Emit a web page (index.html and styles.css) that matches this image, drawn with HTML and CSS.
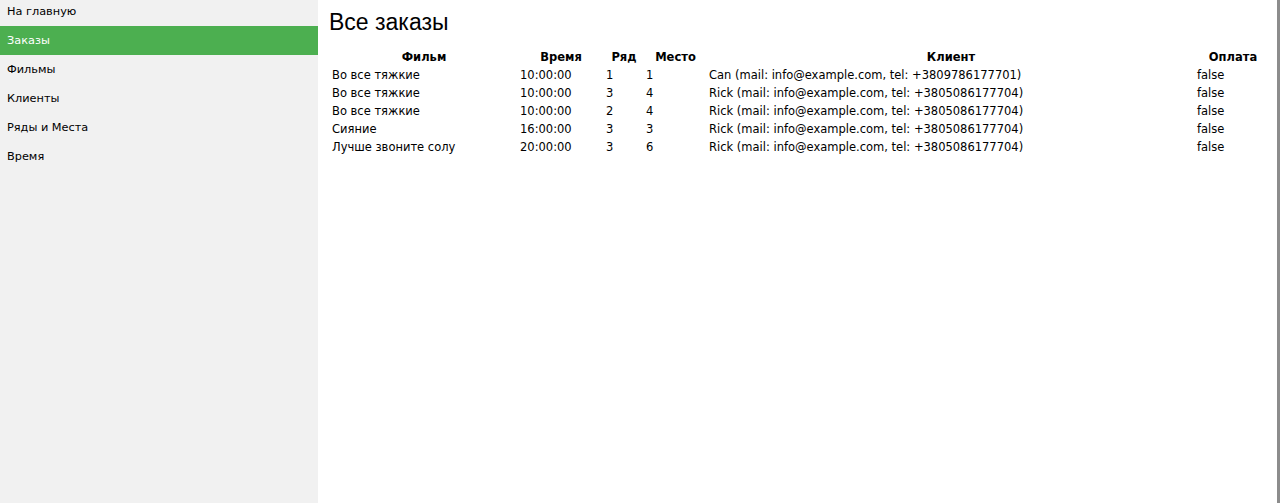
FILE: index.html
```html
<!DOCTYPE html>
<html lang="ru">
<head>
<meta charset="utf-8">
<title>Все заказы</title>
<link rel="stylesheet" href="styles.css">
</head>
<body>
<div class="layout">
  <nav class="sidebar">
    <a class="nav-link first" href="#">На главную</a>
    <a class="nav-link active" href="#">Заказы</a>
    <a class="nav-link" href="#">Фильмы</a>
    <a class="nav-link" href="#">Клиенты</a>
    <a class="nav-link" href="#">Ряды и Места</a>
    <a class="nav-link" href="#">Время</a>
  </nav>
  <main class="content">
    <h1 class="title">Все заказы</h1>
    <table class="orders">
      <thead>
        <tr>
          <th class="c-film">Фильм</th>
          <th class="c-time">Время</th>
          <th class="c-row">Ряд</th>
          <th class="c-seat">Место</th>
          <th class="c-client">Клиент</th>
          <th class="c-paid">Оплата</th>
        </tr>
      </thead>
      <tbody>
        <tr><td>Во все тяжкие</td><td>10:00:00</td><td>1</td><td>1</td><td>Can (mail: info@example.com, tel: +3809786177701)</td><td>false</td></tr>
        <tr><td>Во все тяжкие</td><td>10:00:00</td><td>3</td><td>4</td><td>Rick (mail: info@example.com, tel: +3805086177704)</td><td>false</td></tr>
        <tr><td>Во все тяжкие</td><td>10:00:00</td><td>2</td><td>4</td><td>Rick (mail: info@example.com, tel: +3805086177704)</td><td>false</td></tr>
        <tr><td>Сияние</td><td>16:00:00</td><td>3</td><td>3</td><td>Rick (mail: info@example.com, tel: +3805086177704)</td><td>false</td></tr>
        <tr><td>Лучше звоните солу</td><td>20:00:00</td><td>3</td><td>6</td><td>Rick (mail: info@example.com, tel: +3805086177704)</td><td>false</td></tr>
      </tbody>
    </table>
  </main>
</div>
</body>
</html>
```

FILE: styles.css
```css
html, body {
  margin: 0;
  padding: 0;
  height: 100%;
  background: #ffffff;
}

body {
  font-family: "DejaVu Sans", Verdana, sans-serif;
  font-size: 11.5px;
  color: #000;
}

.layout {
  display: flex;
  height: 503px;
  overflow: hidden;
}

.sidebar {
  width: 318px;
  flex: 0 0 318px;
  background: #f1f1f1;
  display: flex;
  flex-direction: column;
}

.nav-link {
  display: block;
  padding: 7px 7px;
  line-height: 15px;
  font-size: 11.3px;
  color: #000;
  text-decoration: none;
}

.nav-link.first {
  padding-top: 4px;
}

.nav-link.active {
  background: #4caf50;
  color: #fff;
}

.content {
  flex: 1;
  padding: 0 5px 0 11px;
  border-right: 3px solid #8c8c8c;
}

.title {
  font-family: "Liberation Sans", Arial, sans-serif;
  font-weight: normal;
  font-size: 23px;
  margin: 10px 0 12px 0;
  line-height: 25px;
}

.orders {
  width: 100%;
  table-layout: fixed;
  border-spacing: 2px;
}

.orders th,
.orders td {
  padding: 1px;
  line-height: 14px;
  white-space: nowrap;
}

.orders th {
  font-weight: bold;
  text-align: center;
}

.orders td {
  text-align: left;
}

.c-film { width: 184px; }
.c-time { width: 82px; }
.c-row { width: 36px; }
.c-seat { width: 59px; }
.c-client { width: 484px; }
```
